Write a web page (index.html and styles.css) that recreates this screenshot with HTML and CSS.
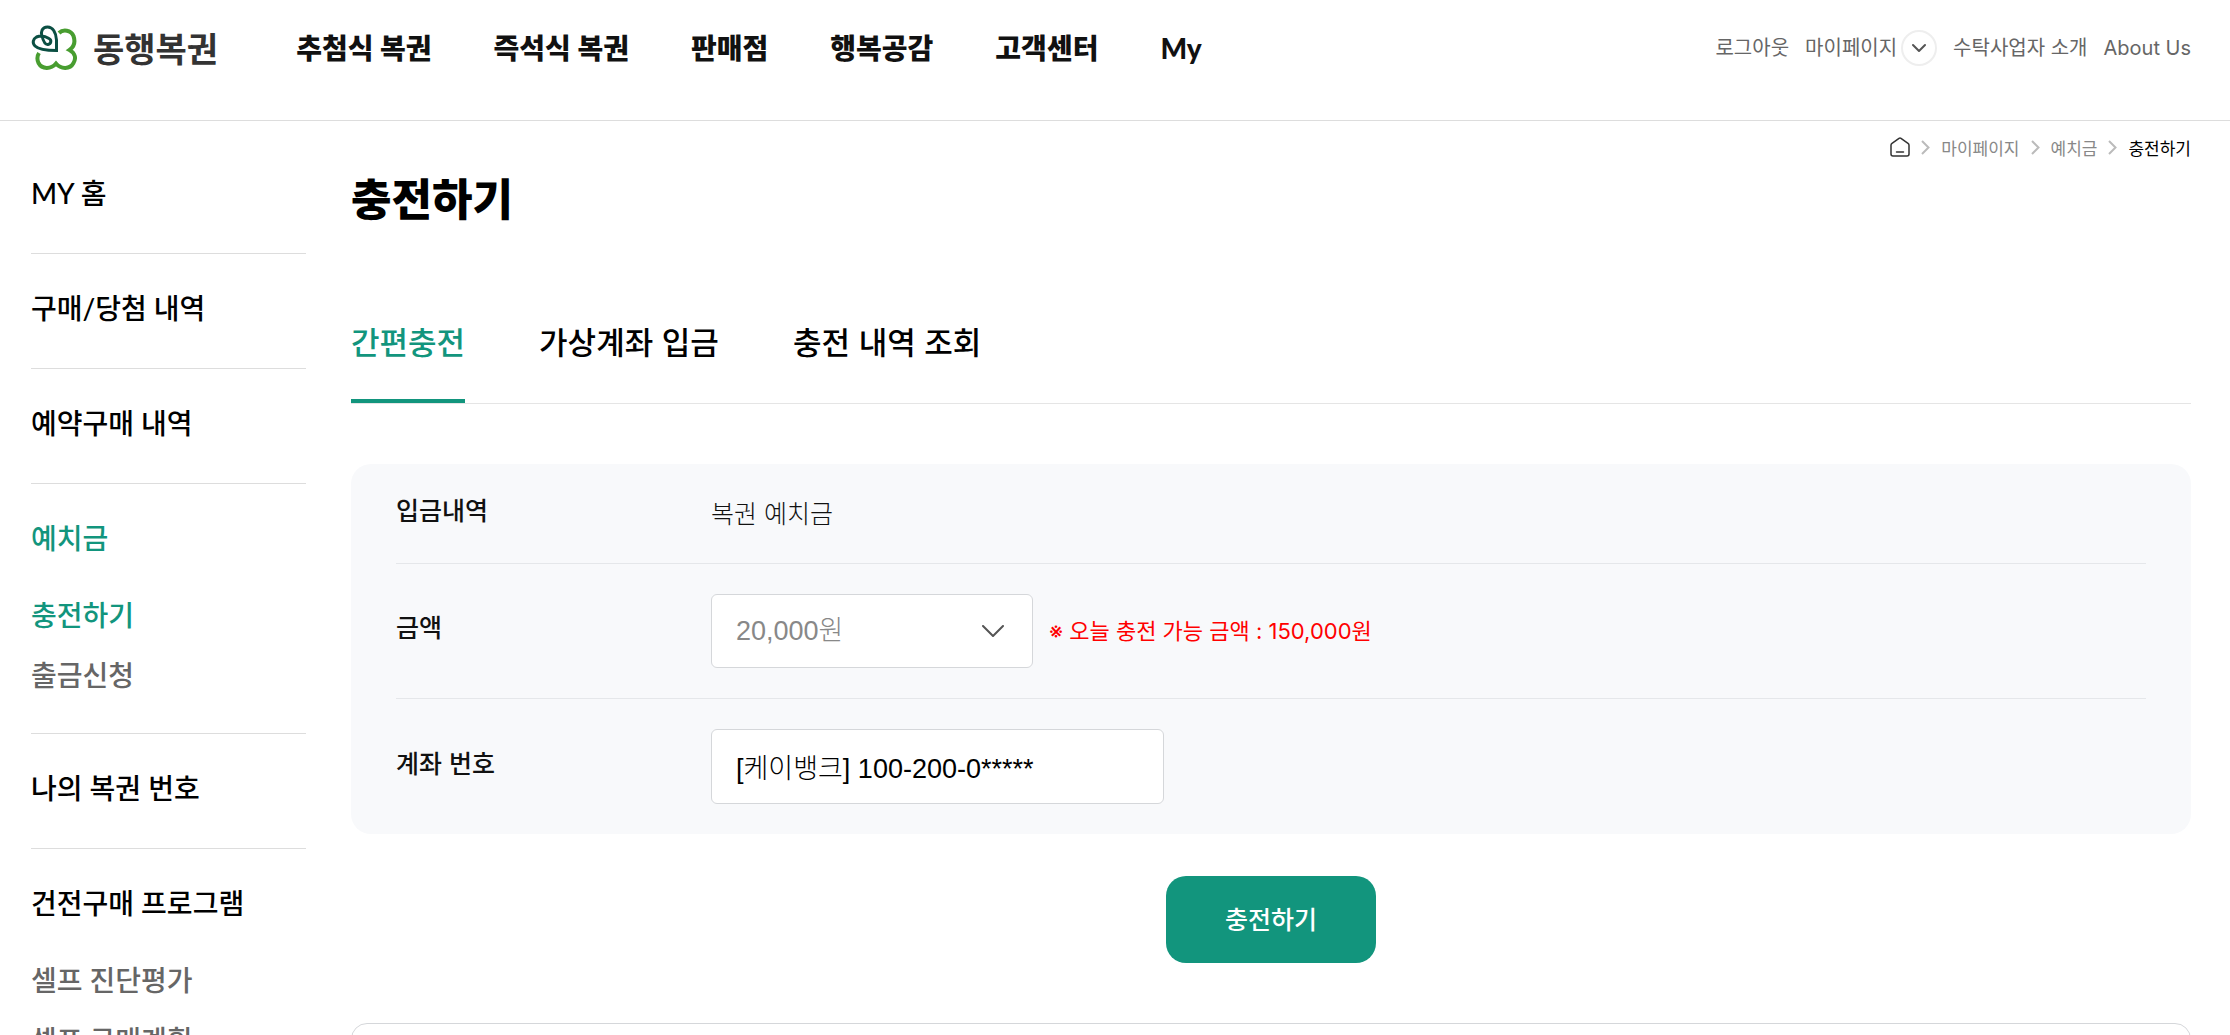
FILE: index.html
```html
<!DOCTYPE html>
<html lang="ko">
<head>
<meta charset="utf-8">
<meta name="viewport" content="width=device-width, initial-scale=1">
<title>충전하기 | 동행복권</title>
<link rel="stylesheet" href="styles.css">
</head>
<body>
<header class="header">
  <a class="logo" href="#">
    <svg class="logo-mark" viewBox="0 0 46 46" fill="none" stroke-linecap="butt" stroke-linejoin="miter" aria-hidden="true">
      <path d="M28 8C32 4 40 5 42.500 11C44.500 17 43 22 38.500 25C44 28 45.500 33 42.500 38C39 44.500 30 44.500 25 38.500C20 44.500 11 44.500 7.500 38C6 34.500 6 31 8 28" stroke="#489d30" stroke-width="4"/>
      <path d="M25.500 25.500V15C25 8 22 2 16.500 2C11 2 9.500 7 11 11C12 15 14 20 17 19.500C20 19 21 15 18 13.500C14 11 9 10.500 5.500 12C2 14 1 18 4 21C8 25 17 25.500 25.500 25.500Z" stroke="#0b4f43" stroke-width="3"/>
    </svg>
    <span class="logo-text">동행복권</span>
  </a>
  <nav class="gnb" aria-label="주 메뉴">
    <a href="#">추첨식 복권</a>
    <a href="#">즉석식 복권</a>
    <a href="#">판매점</a>
    <a href="#">행복공감</a>
    <a href="#">고객센터</a>
    <a href="#">My</a>
  </nav>
  <div class="util">
    <a href="#">로그아웃</a>
    <div class="util-my">
      <a href="#">마이페이지</a>
      <button class="util-toggle" type="button" aria-label="마이페이지 메뉴 열기">
        <svg viewBox="0 0 14 10" width="14" height="10" fill="none" stroke="#555" stroke-width="2" stroke-linecap="round" stroke-linejoin="round"><path d="M1 2l6 6 6-6"/></svg>
      </button>
    </div>
    <a href="#">수탁사업자 소개</a>
    <a href="#">About Us</a>
  </div>
</header>

<div class="page">
  <aside class="side">
    <section class="side-group"><a href="#">MY 홈</a></section>
    <section class="side-group"><a href="#">구매/당첨 내역</a></section>
    <section class="side-group"><a href="#">예약구매 내역</a></section>
    <section class="side-group has-sub">
      <a class="on" href="#">예치금</a>
      <ul class="side-sub">
        <li><a class="on" href="#">충전하기</a></li>
        <li><a href="#">출금신청</a></li>
      </ul>
    </section>
    <section class="side-group"><a href="#">나의 복권 번호</a></section>
    <section class="side-group has-sub">
      <a href="#">건전구매 프로그램</a>
      <ul class="side-sub">
        <li><a href="#">셀프 진단평가</a></li>
        <li><a href="#">셀프 구매계획</a></li>
      </ul>
    </section>
  </aside>

  <main class="main">
    <nav class="crumbs" aria-label="현재 위치">
      <a href="#" aria-label="홈">
        <svg viewBox="0 0 20 20" width="20" height="20" fill="none" stroke="#333" stroke-width="1.5" stroke-linecap="round" stroke-linejoin="round"><path d="M1 8.200Q1 7 2 6.300L9 1.300Q10 .7 11 1.300L18 6.300Q19 7 19 8.200V17Q19 19 17 19H3Q1 19 1 17ZM6.500 15h7"/></svg>
      </a>
      <svg class="crumb-sep" viewBox="0 0 9 15"><path d="M1 1l6.500 6.500L1 14"/></svg>
      <a href="#">마이페이지</a>
      <svg class="crumb-sep" viewBox="0 0 9 15"><path d="M1 1l6.500 6.500L1 14"/></svg>
      <a href="#">예치금</a>
      <svg class="crumb-sep" viewBox="0 0 9 15"><path d="M1 1l6.500 6.500L1 14"/></svg>
      <a class="current" href="#" aria-current="page">충전하기</a>
    </nav>
    <h1 class="title">충전하기</h1>
    <nav class="tabs" aria-label="충전 방법">
      <a class="tab active" href="#">간편충전</a>
      <a class="tab" href="#">가상계좌 입금</a>
      <a class="tab" href="#">충전 내역 조회</a>
    </nav>
    <form class="charge">
      <div class="panel">
        <div class="row">
          <span class="label">입금내역</span>
          <span class="value">복권 예치금</span>
        </div>
        <div class="row">
          <label class="label" for="amount">금액</label>
          <div class="select-box">
            <select id="amount"><option>20,000원</option></select>
            <svg class="select-arrow" viewBox="0 0 22 12" fill="none" stroke="#555" stroke-width="2" stroke-linecap="round" stroke-linejoin="round" aria-hidden="true"><path d="M1 1l10 10L21 1"/></svg>
          </div>
          <p class="notice">※ 오늘 충전 가능 금액 : 150,000원</p>
        </div>
        <div class="row">
          <label class="label" for="account">계좌 번호</label>
          <input class="account" id="account" type="text" value="[케이뱅크] 100-200-0*****" readonly>
        </div>
      </div>
      <button class="submit" type="submit">충전하기</button>
    </form>
    <section class="guide"></section>
  </main>
</div>
</body>
</html>
```
FILE: styles.css
```css
* { box-sizing: border-box; }

body {
  height: 100vh;
  margin: 0;
  overflow: hidden;
  background: #fff;
  color: #000;
  font-family: "Noto Sans CJK KR", sans-serif;
}

a { color: inherit; text-decoration: none; }
ul { margin: 0; padding: 0; list-style: none; }

/* header */
.header {
  display: flex;
  align-items: flex-start;
  height: 121px;
  padding: 24px 39px 0 31px;
  border-bottom: 1px solid #ddd;
}
.logo { display: flex; align-items: center; gap: 16px; height: 48px; }
.logo-mark { width: 46px; height: 46px; }
.logo-text { color: #333; font-size: 34px; font-weight: 700; line-height: 48px; }
.gnb {
  display: flex;
  gap: 62px;
  margin-left: 78px;
  color: #111;
  font-family: "Lato", "Noto Sans CJK KR", sans-serif;
  font-size: 28px;
  font-weight: 900;
  line-height: 48px;
  white-space: nowrap;
}
.util {
  display: flex;
  gap: 16px;
  margin-left: auto;
  color: #666;
  font-family: "Inter", "Noto Sans CJK KR", sans-serif;
  font-size: 20px;
  line-height: 48px;
  white-space: nowrap;
}
.util-my { display: flex; align-items: center; gap: 4px; }
.util-toggle {
  display: flex;
  align-items: center;
  justify-content: center;
  width: 36px;
  height: 36px;
  padding: 0;
  border: 2px solid #eee;
  border-radius: 50%;
  background: #fff;
}

/* columns */
.page {
  display: grid;
  grid-template-columns: 275px minmax(0, 1fr);
  column-gap: 45px;
  padding: 0 39px 0 31px;
}

/* side menu */
.side {
  padding-top: 18px;
  font-family: "Lato", "Noto Sans CJK KR", sans-serif;
  font-size: 28px;
  font-weight: 500;
  line-height: 40px;
}
.side-group { padding: 34px 0 40px; border-bottom: 1px solid #ddd; }
.side-group.has-sub { padding-bottom: 38px; }
.side-sub { display: grid; gap: 20px; margin-top: 37px; color: #666; }
.on { color: #12957d; }

/* main column */
.crumbs {
  display: flex;
  align-items: center;
  justify-content: flex-end;
  gap: 11px;
  height: 52px;
  color: #888;
  font-size: 17px;
}
.crumbs a { display: flex; }
.crumbs .current { color: #000; }
.crumb-sep { width: 9px; height: 15px; fill: none; stroke: #bbb; stroke-width: 2; }
.title { margin: 0; font-size: 44px; font-weight: 900; line-height: 48px; }
.tabs {
  display: flex;
  gap: 74px;
  margin-top: 88px;
  border-bottom: 1px solid #e5e5e5;
  font-size: 31px;
  font-weight: 500;
  line-height: 64px;
}
.tab { padding-bottom: 26px; border-bottom: 4px solid transparent; }
.tab.active { border-color: #12957d; color: #12957d; }

/* charge form */
.charge { display: flex; flex-direction: column; align-items: center; }
.panel {
  width: 100%;
  margin-top: 60px;
  padding: 0 45px;
  border-radius: 20px;
  background: #f8f9fb;
}
.row {
  display: flex;
  align-items: center;
  min-height: 100px;
  padding: 30px 0;
  border-bottom: 1px solid #e5e7ea;
}
.row:last-child { border-bottom: 0; }
.label { width: 315px; padding-bottom: 10px; color: #111; font-size: 25px; font-weight: 500; line-height: 28px; }
.value { padding-bottom: 4px; color: #111; font-size: 25px; font-weight: 300; line-height: 34px; }
.select-box { position: relative; width: 322px; }
.select-box select,
.account {
  display: block;
  width: 100%;
  height: 74px;
  padding: 0 24px;
  border: 1px solid #d5d7da;
  border-radius: 6px;
  background: #fff;
  font-family: "Liberation Sans", "Noto Sans CJK KR", sans-serif;
  font-size: 27px;
  font-weight: 300;
}
.select-box select { appearance: none; color: #888; }
.select-arrow {
  position: absolute;
  top: 31px;
  right: 29px;
  width: 22px;
  height: 12px;
  pointer-events: none;
}
.notice {
  margin: 0 0 0 16px;
  color: #f00;
  font-family: "Inter", "Noto Sans CJK KR", sans-serif;
  font-size: 22px;
  line-height: 32px;
}
.account { width: 453px; height: 75px; color: #000; }
.submit {
  min-width: 210px;
  height: 87px;
  margin-top: 42px;
  padding-bottom: 4px;
  border: 0;
  border-radius: 20px;
  background: #12957d;
  color: #fff;
  font: 500 25px "Noto Sans CJK KR", sans-serif;
}
.guide {
  height: 200px;
  margin-top: 60px;
  border: 1px solid #d5d7da;
  border-radius: 16px;
}
```
